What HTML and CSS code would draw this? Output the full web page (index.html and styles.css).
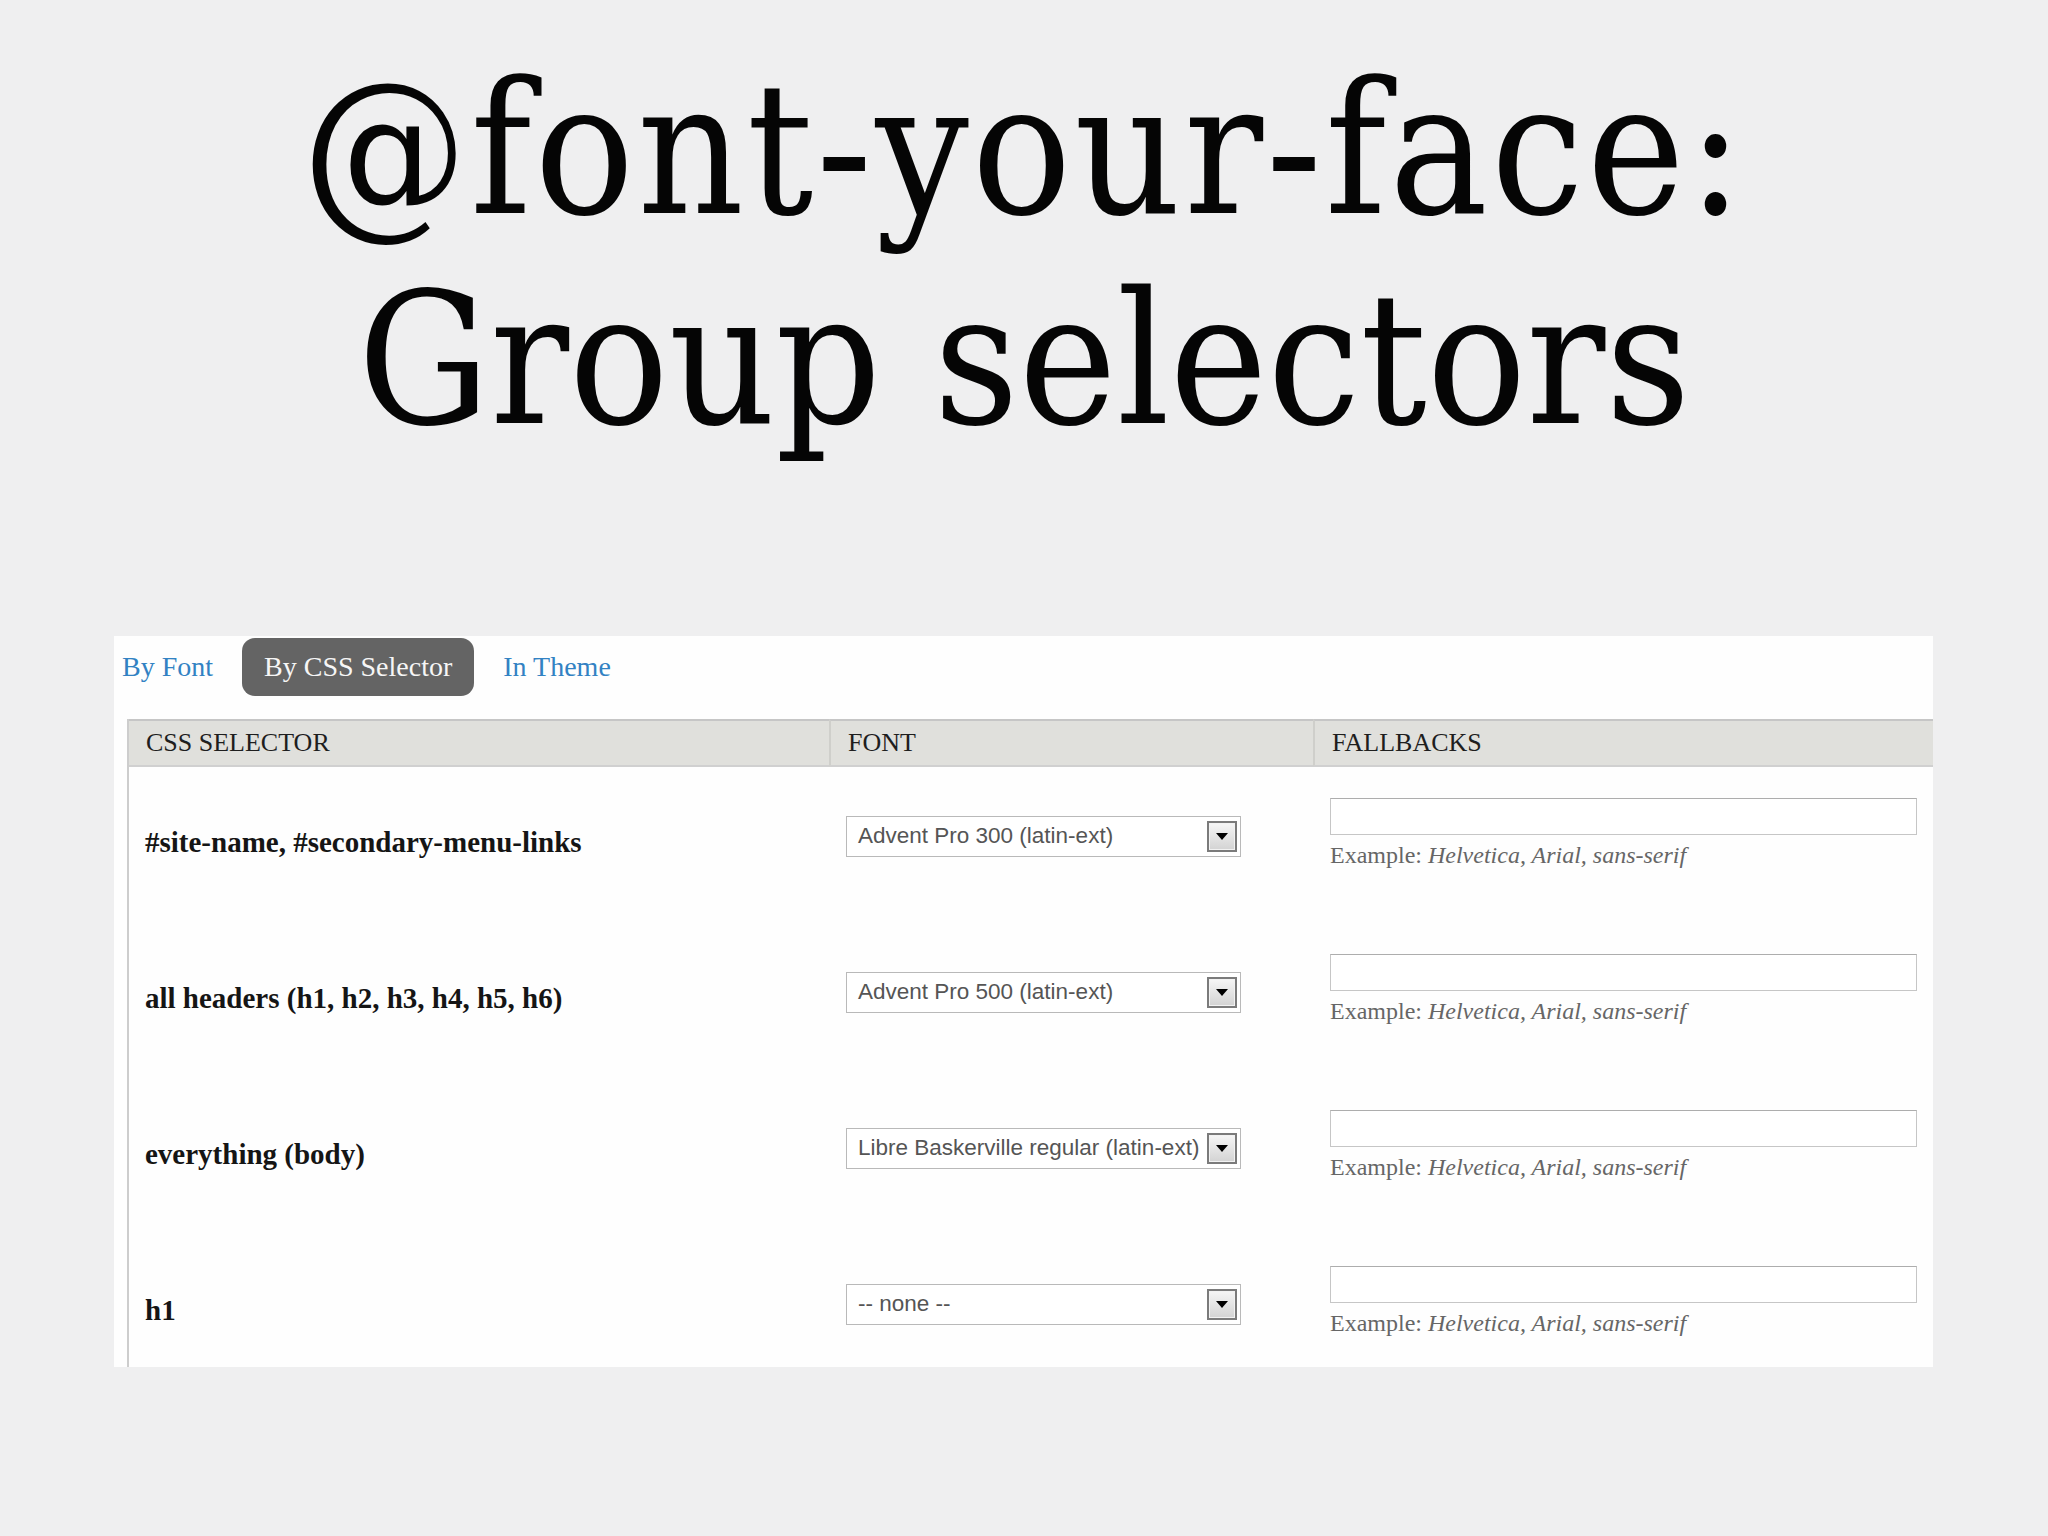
FILE: index.html
```html
<!DOCTYPE html>
<html lang="en">
<head>
<meta charset="utf-8">
<title>@font-your-face: Group selectors</title>
<link rel="stylesheet" href="styles.css">
</head>
<body>
<h1 class="title"><span class="line1">@font-your-face:</span><br><span class="line2">Group selectors</span></h1>

<div class="panel">
  <nav class="tabs">
    <a class="tab">By Font</a>
    <a class="tab active">By CSS Selector</a>
    <a class="tab">In Theme</a>
  </nav>
  <table class="selectors">
    <colgroup>
      <col class="c-sel">
      <col class="c-font">
      <col class="c-fb">
    </colgroup>
    <thead>
      <tr><th>CSS SELECTOR</th><th class="div">FONT</th><th class="div">FALLBACKS</th></tr>
    </thead>
    <tbody>
      <tr>
        <td class="label">#site-name, #secondary-menu-links</td>
        <td class="fontcell"><div class="select"><span class="val">Advent Pro 300 (latin-ext)</span><span class="btn"><svg width="12" height="7" viewBox="0 0 12 7"><path d="M0 0H12L6 7Z" fill="#000"/></svg></span></div></td>
        <td class="fbcell"><input class="fb" type="text"><div class="example">Example: <em>Helvetica, Arial, sans-serif</em></div></td>
      </tr>
      <tr>
        <td class="label">all headers (h1, h2, h3, h4, h5, h6)</td>
        <td class="fontcell"><div class="select"><span class="val">Advent Pro 500 (latin-ext)</span><span class="btn"><svg width="12" height="7" viewBox="0 0 12 7"><path d="M0 0H12L6 7Z" fill="#000"/></svg></span></div></td>
        <td class="fbcell"><input class="fb" type="text"><div class="example">Example: <em>Helvetica, Arial, sans-serif</em></div></td>
      </tr>
      <tr>
        <td class="label">everything (body)</td>
        <td class="fontcell"><div class="select"><span class="val">Libre Baskerville regular (latin-ext)</span><span class="btn"><svg width="12" height="7" viewBox="0 0 12 7"><path d="M0 0H12L6 7Z" fill="#000"/></svg></span></div></td>
        <td class="fbcell"><input class="fb" type="text"><div class="example">Example: <em>Helvetica, Arial, sans-serif</em></div></td>
      </tr>
      <tr>
        <td class="label">h1</td>
        <td class="fontcell"><div class="select"><span class="val">-- none --</span><span class="btn"><svg width="12" height="7" viewBox="0 0 12 7"><path d="M0 0H12L6 7Z" fill="#000"/></svg></span></div></td>
        <td class="fbcell"><input class="fb" type="text"><div class="example">Example: <em>Helvetica, Arial, sans-serif</em></div></td>
      </tr>
    </tbody>
  </table>
</div>
</body>
</html>
```
FILE: styles.css
```css
html, body {
  margin: 0;
  padding: 0;
}
body {
  background: #efeff0;
  width: 2048px;
  height: 1536px;
  overflow: hidden;
}
.title {
  margin: 44px 0 0 0;
  font-family: "DejaVu Serif Condensed", "DejaVu Serif", serif;
  font-stretch: condensed;
  font-weight: normal;
  font-size: 184px;
  line-height: 210px;
  text-align: center;
  color: #050505;
}
.line1 {
  letter-spacing: 3px;
}
.panel {
  margin: 172px 0 0 114px;
  width: 1819px;
  height: 731px;
  background: #fefefe;
  overflow: hidden;
}
.tabs {
  display: flex;
  align-items: center;
  gap: 29px;
  padding: 2px 0 0 8px;
  height: 58px;
}
.tab {
  font-family: "Liberation Serif", serif;
  font-size: 28px;
  line-height: 58px;
  color: #3282c3;
}
.tab.active {
  background: #646464;
  color: #f6f6f6;
  padding: 0 22px;
  border-radius: 13px;
}
.selectors {
  margin: 23px 0 0 13px;
  width: 1806px;
  table-layout: fixed;
  border-collapse: separate;
  border-spacing: 0;
  border-left: 2px solid #cdcdcd;
}
.c-sel { width: 700px; }
.c-font { width: 484px; }
.c-fb { width: 620px; }
.selectors th {
  background: #e0e0dc;
  border-top: 2px solid #c6c6c6;
  border-bottom: 2px solid #d0d0d0;
  height: 44px;
  padding: 0 0 0 17px;
  text-align: left;
  font-family: "Liberation Serif", serif;
  font-weight: normal;
  font-size: 26px;
  line-height: 44px;
  color: #1e1e1e;
}
.selectors th.div {
  border-left: 2px solid #cfcfcb;
}
.selectors td {
  height: 156px;
  padding: 0;
  vertical-align: middle;
  box-sizing: border-box;
}
.label {
  padding: 0 0 6px 16px !important;
  font-family: "Liberation Serif", serif;
  font-weight: bold;
  font-size: 29px;
  color: #151515;
}
.fontcell {
  padding: 0 0 18px 17px !important;
}
.select {
  display: flex;
  align-items: center;
  box-sizing: border-box;
  width: 395px;
  height: 41px;
  border: 1px solid #b9b9b9;
  background: #fff;
  padding: 0 3px 0 11px;
}
.val {
  flex: 1;
  font-family: "Liberation Sans", Arial, sans-serif;
  font-size: 22.5px;
  color: #555;
  white-space: nowrap;
}
.btn {
  display: flex;
  align-items: center;
  justify-content: center;
  box-sizing: border-box;
  width: 30px;
  height: 31px;
  border: 2px solid #7b7b7b;
  box-shadow: inset 0 0 0 1px #f2f2f2;
  background: linear-gradient(#f6f6f6, #d3d3d3);
}
.fbcell {
  padding: 0 0 24px 17px !important;
}
.fb {
  display: block;
  box-sizing: border-box;
  width: 587px;
  height: 37px;
  margin: 0;
  border: 1px solid #c6c6c6;
  border-top-color: #adadad;
  background: #fff;
}
.example {
  margin-top: 6px;
  font-family: "Liberation Serif", serif;
  font-size: 24px;
  line-height: 28px;
  color: #666;
}
.example em {
  font-style: italic;
}
```
